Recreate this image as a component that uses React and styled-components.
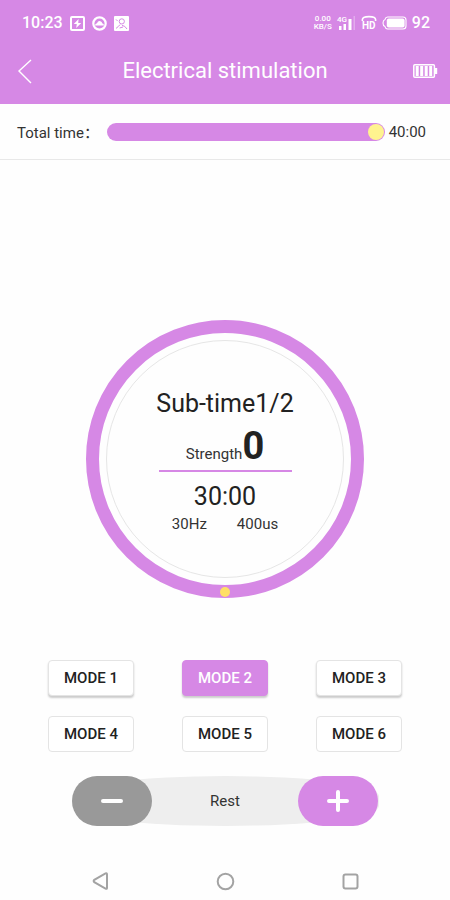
import React, { useState } from "react";
import styled, { createGlobalStyle, css } from "styled-components";

const purple = "#d688e5";
const modes = [1, 2, 3, 4, 5, 6];

export default function App() {
  const [mode, setMode] = useState(2);
  const [total, setTotal] = useState(40);
  const [strength, setStrength] = useState(0);

  return (
    <>
      <GlobalStyle />
      <Page>
        <Header>
          <StatusBar>
            <StatusGroup>
              <StatusText>10:23</StatusText>
              <FlashIcon />
              <CloudIcon />
              <PersonIcon />
            </StatusGroup>
            <StatusRight>
              <Speed>
                <span>0.00</span>
                <span>KB/S</span>
              </Speed>
              <SignalIcon />
              <CallIcon />
              <PhoneBatteryIcon />
              <StatusText>92</StatusText>
            </StatusRight>
          </StatusBar>
          <TitleBar>
            <BackButton aria-label="Back">
              <svg width="16" height="26" viewBox="0 0 16 26">
                <path
                  d="M14 2 L2 13 L14 25"
                  fill="none"
                  stroke="#fff"
                  strokeWidth="1.4"
                />
              </svg>
            </BackButton>
            <Title>Electrical stimulation</Title>
            <DeviceBatteryIcon />
          </TitleBar>
        </Header>

        <TimeRow>
          <TimeLabel htmlFor="total">Total time：</TimeLabel>
          <TimeSlider
            id="total"
            type="range"
            min="0"
            max="40"
            value={total}
            onChange={(e) => setTotal(Number(e.target.value))}
          />
          <output htmlFor="total">{total}:00</output>
        </TimeRow>

        <Main>
          <Dial>
            <DialFace>
              <DialBig>Sub-time1/2</DialBig>
              <Strength>
                Strength<strong>{strength}</strong>
              </Strength>
              <DialLine />
              <DialBig>30:00</DialBig>
              <DialInfo>
                <span>30Hz</span>
                <span>400us</span>
              </DialInfo>
            </DialFace>
            <DialDot />
          </Dial>

          <Modes>
            {modes.map((m) => (
              <ModeButton
                key={m}
                $active={m === mode}
                $raised={m < 4}
                onClick={() => setMode(m)}
              >
                MODE {m}
              </ModeButton>
            ))}
          </Modes>

          <Controls>
            <StepButton
              aria-label="Decrease strength"
              $color="#999"
              onClick={() => setStrength(Math.max(0, strength - 1))}
            >
              <StepIcon d="M3 12 H21" />
            </StepButton>
            <span>Rest</span>
            <StepButton
              aria-label="Increase strength"
              $color={purple}
              onClick={() => setStrength(strength + 1)}
            >
              <StepIcon d="M3 12 H21 M12 3 V21" />
            </StepButton>
          </Controls>
        </Main>

        <NavBar>
          <NavButton aria-label="Back">
            <NavIcon>
              <path d="M17 3.4 V16.8 Q17 18.3 15.5 17.6 L4.3 11.2 Q3 10 4.3 8.8 L15.5 2.4 Q17 1.9 17 3.4 Z" />
            </NavIcon>
          </NavButton>
          <NavButton aria-label="Home">
            <NavIcon>
              <circle cx="10.5" cy="10.5" r="7.8" />
            </NavIcon>
          </NavButton>
          <NavButton aria-label="Recent apps">
            <NavIcon>
              <rect x="3.5" y="3.5" width="14" height="14" rx="2" />
            </NavIcon>
          </NavButton>
        </NavBar>
      </Page>
    </>
  );
}

////
//icons
////

function FlashIcon() {
  return (
    <svg width="15" height="15" viewBox="0 0 15 15">
      <rect x="1" y="1" width="13" height="13" rx="1" fill="none" stroke="#fff" strokeWidth="2" />
      <path d="M8.6 3 L3.8 8 H6.8 L6.2 12 L11.2 7 H8.2 Z" fill="#fff" />
    </svg>
  );
}

function CloudIcon() {
  return (
    <svg width="15" height="15" viewBox="0 0 15 15">
      <circle cx="7.5" cy="7.5" r="6.2" fill="none" stroke="#fff" strokeWidth="2.2" />
      <path d="M3 9.6 Q3 7.4 5 7.2 Q6 4.6 8.4 5.2 Q10 5.6 10.2 7.2 Q12 7.6 12 9.6 Z" fill="#fff" />
    </svg>
  );
}

function PersonIcon() {
  return (
    <svg width="15" height="15" viewBox="0 0 15 15">
      <rect width="15" height="15" rx="1" fill="#fff" />
      <g fill="none" stroke={purple} strokeWidth="1">
        <circle cx="7.8" cy="5.4" r="2.6" />
        <path d="M2 12.4 Q4.4 10.8 6 8.6 M8 9.4 Q11 9.6 13 13 M2 3.4 L3.6 5 M5.6 12 L9 11" />
      </g>
    </svg>
  );
}

function SignalIcon() {
  return (
    <svg width="19" height="18" viewBox="0 0 19 18" fill="#fff">
      <text x="0" y="8" fontSize="8" fontWeight="500">4G</text>
      <rect x="2" y="12" width="2.5" height="4" />
      <rect x="6.5" y="10" width="2.5" height="6" />
      <rect x="11.5" y="5" width="3" height="11" />
      <rect x="16.5" y="2" width="1.5" height="14" opacity="0.3" />
    </svg>
  );
}

function CallIcon() {
  return (
    <svg width="16" height="20" viewBox="0 0 16 20" fill="#fff">
      <path d="M1.4 8 V6.6 Q1.4 3.6 8 3.6 T14.6 6.6 V8" fill="none" stroke="#fff" strokeWidth="1.6" />
      <text x="1" y="16" fontSize="10" fontWeight="700">HD</text>
    </svg>
  );
}

function PhoneBatteryIcon() {
  return (
    <svg width="25" height="14" viewBox="0 0 25 14">
      <path
        d="M5.6 1 H21 Q24 1 24 4 V10 Q24 13 21 13 H5.6 Q3.6 13 3 10.6 Q1 9.8 1 7 T3 3.4 Q3.6 1 5.6 1 Z"
        fill="none"
        stroke="#fff"
        strokeWidth="1.1"
      />
      <rect x="4.8" y="2.6" width="17.8" height="8.8" rx="2" fill="#fff" />
    </svg>
  );
}

function DeviceBatteryIcon() {
  return (
    <svg width="25" height="14" viewBox="0 0 25 14">
      <rect x="0.8" y="0.8" width="20.6" height="12.4" rx="1" fill="none" stroke="#fff" strokeWidth="1.5" />
      <path d="M23 4 V10" stroke="#fff" strokeWidth="2.4" />
      <path d="M4.2 2 V12 M8.7 2 V12 M13.2 2 V12 M17.7 2 V12" stroke="#fff" strokeWidth="3" />
    </svg>
  );
}

function StepIcon({ d }) {
  return (
    <svg width="24" height="24" viewBox="0 0 24 24">
      <path d={d} stroke="#fff" strokeWidth="4" strokeLinecap="round" />
    </svg>
  );
}

function NavIcon({ children }) {
  return (
    <svg width="20" height="20" viewBox="0 0 20 20" fill="none" stroke="#a3a3a3" strokeWidth="2">
      {children}
    </svg>
  );
}

////
//style
////

const GlobalStyle = createGlobalStyle`
  * {
    box-sizing: border-box;
  }
  body {
    margin: 0;
    background: #fefefe;
    color: #333;
    font-family: Roboto, "Noto Sans CJK SC", sans-serif;
    font-size: 15px;
  }
  button {
    font-family: inherit;
    border: 0;
    padding: 0;
    cursor: pointer;
  }
  svg {
    display: block;
    flex-shrink: 0;
    overflow: visible;
  }
`;

const Page = styled.div`
  min-height: 100vh;
  display: flex;
  flex-direction: column;
`;
const Header = styled.header`
  background: ${purple};
  color: white;
`;
const StatusBar = styled.div`
  height: 46px;
  padding: 0 20px 0 22px;
  display: flex;
  align-items: center;
  justify-content: space-between;
`;
const StatusGroup = styled.div`
  display: flex;
  align-items: center;
  gap: 7px;
`;
const StatusRight = styled(StatusGroup)`
  gap: 5px;
`;
const StatusText = styled.span`
  font-size: 16px;
  font-weight: 500;
  line-height: 20px;
`;
const Speed = styled.div`
  display: flex;
  flex-direction: column;
  align-items: center;
  font-size: 8px;
  font-weight: 500;
  line-height: 8px;
`;
const TitleBar = styled.div`
  height: 58px;
  padding: 0 12px 8px;
  display: grid;
  grid-template-columns: 25px 1fr 25px;
  align-items: center;
`;
const BackButton = styled.button`
  display: flex;
  justify-content: center;
  background: none;
`;
const Title = styled.h1`
  margin: 0;
  text-align: center;
  font-size: 22px;
  font-weight: 400;
  line-height: 28px;
`;
const TimeRow = styled.section`
  height: 56px;
  padding: 0 24px 0 17px;
  display: flex;
  align-items: center;
  gap: 4px;
  border-bottom: 1px solid #e8e8e8;
`;
const TimeLabel = styled.label`
  margin-right: 4px;
`;
const TimeSlider = styled.input`
  appearance: none;
  flex: 1;
  min-width: 0;
  height: 18px;
  margin: 0;
  padding: 0 1px;
  border-radius: 9px;
  background: ${purple};
  &::-webkit-slider-thumb {
    appearance: none;
    width: 16px;
    height: 16px;
    border-radius: 50%;
    background: #fff38f;
  }
`;
const Main = styled.main`
  padding: 160px 48px 0;
  display: flex;
  flex-direction: column;
  align-items: center;
`;
const Dial = styled.div`
  position: relative;
  width: 278px;
  height: 278px;
  padding: 7px;
  border: 13px solid ${purple};
  border-radius: 50%;
`;
const DialFace = styled.div`
  height: 100%;
  padding-top: 47px;
  border: 1px solid #e6e6e6;
  border-radius: 50%;
  display: flex;
  flex-direction: column;
  align-items: center;
`;
const DialBig = styled.div`
  color: #222;
  font-size: 25px;
  line-height: 32px;
`;
const Strength = styled.div`
  margin-top: 10px;
  font-size: 15px;
  line-height: 32px;
  strong {
    color: #222;
    font-size: 38px;
  }
`;
const DialLine = styled.hr`
  width: 133px;
  height: 2px;
  margin: 0 0 9px;
  border: 0;
  background: ${purple};
`;
const DialInfo = styled.div`
  display: flex;
  gap: 30px;
  font-size: 15px;
  line-height: 22px;
`;
const DialDot = styled.span`
  position: absolute;
  bottom: -12px;
  left: 50%;
  width: 10px;
  height: 10px;
  margin-left: -5px;
  border-radius: 50%;
  background: #ffdf66;
`;
const Modes = styled.div`
  width: 100%;
  margin-top: 62px;
  display: grid;
  grid-template-columns: repeat(3, 86px);
  justify-content: space-between;
  row-gap: 20px;
`;
const ModeButton = styled.button`
  height: 36px;
  border: 1px solid #e4e4e4;
  border-radius: 4px;
  background: white;
  color: #222;
  font-size: 15px;
  font-weight: 500;
  ${(props) =>
    props.$raised &&
    css`
      box-shadow: 0 2px 2px rgba(0, 0, 0, 0.2);
    `}
  ${(props) =>
    props.$active &&
    css`
      border-color: ${purple};
      background: ${purple};
      color: white;
    `}
`;
const Controls = styled.div`
  width: 307px;
  height: 50px;
  margin-top: 24px;
  display: flex;
  align-items: center;
  justify-content: space-between;
  border-radius: 50% / 20px;
  background: #eee;
`;
const StepButton = styled.button`
  width: 80px;
  height: 50px;
  display: flex;
  align-items: center;
  justify-content: center;
  border-radius: 25px;
  background: ${(props) => props.$color};
`;
const NavBar = styled.nav`
  height: 38px;
  margin-top: auto;
  padding: 0 88px;
  display: flex;
  align-items: center;
  justify-content: space-between;
`;
const NavButton = styled.button`
  padding: 2px;
  background: none;
`;
